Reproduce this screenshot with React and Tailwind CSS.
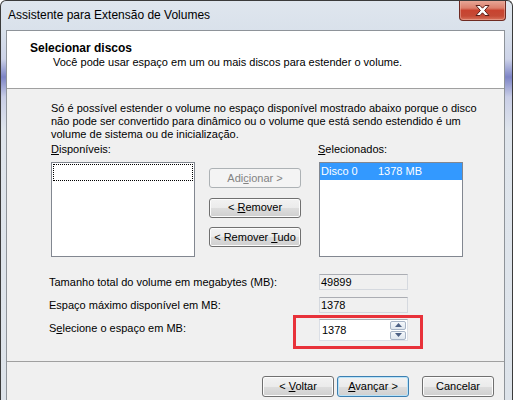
import React from 'react';

function Btn({ children, disabled, primary, className = '' }) {
  let look = 'border-[#707070] bg-[linear-gradient(to_bottom,#f2f2f2_0%,#ebebeb_50%,#dddddd_51%,#cfcfcf_100%)] shadow-[inset_0_0_0_1px_#fcfcfc] text-black';
  if (disabled) look = 'border-[#adb2b5] bg-[#f4f4f4] text-[#838383]';
  if (primary) look = 'border-[#3c7fb1] bg-[linear-gradient(to_bottom,#f2f2f2_0%,#ebebeb_50%,#dddddd_51%,#cfcfcf_100%)] shadow-[inset_0_0_0_1px_#b9e3f9] text-black';
  return (
    <div className={`flex items-center justify-center rounded-[3px] border text-[11px] leading-none ${look} ${className}`}>
      <span className="whitespace-pre">{children}</span>
    </div>
  );
}

function Arrow({ up }) {
  return (
    <svg width="7" height="4" viewBox="0 0 7 4">
      <path d={up ? 'M0 4 L3.5 0 L7 4 Z' : 'M0 0 L3.5 4 L7 0 Z'} fill="#4d6185" />
    </svg>
  );
}

export default function App() {
  return (
    <div className="w-[513px] h-[400px] overflow-hidden flex flex-col border-l border-t border-r border-[#3b3b3b] rounded-tl-[6px] rounded-tr-[6px] bg-[linear-gradient(to_bottom,#dfe6ee_0px,#d9e1eb_30px,#cdd3e8_58px,#7d84c6_76px,#c9cee6_96px,#dfe5ec_130px,#dde3ea_100%)] font-['Liberation_Sans',Arial,sans-serif] text-black">

      {/* title bar */}
      <div className="h-[29px] flex items-start">
        <span className="ml-[7px] mt-[7px] text-[12px] leading-[15px]">Assistente para Extensão de Volumes</span>
        <div className="ml-auto mr-[6px] -mt-[1px] w-[47px] h-[21px] rounded-b-[4px] border border-t-0 border-[#6e2a22] bg-[linear-gradient(to_bottom,#e9ab9c_0%,#dc7f6c_40%,#c8432f_52%,#c54a35_80%,#d9735c_100%)] shadow-[inset_0_0_0_1px_#f0b8aa80] flex items-center justify-center">
          <svg width="15" height="11" viewBox="0 0 15 11">
            <path d="M1 0.5 H5 L7.5 3.2 L10 0.5 H14 L9.6 5.5 L14 10.5 H10 L7.5 7.8 L5 10.5 H1 L5.4 5.5 Z" fill="#ffffff" stroke="#5a1f18" strokeWidth="1" strokeLinejoin="round" />
          </svg>
        </div>
      </div>

      {/* client area */}
      <div className="flex-1 ml-[5px] mr-[7px] border-l border-r border-t border-[#8e9399] bg-[#f0f0f0] flex flex-col">

        {/* header */}
        <div className="h-[58px] shrink-0 bg-white border-b border-[#a0a0a0] pt-[10px]">
          <div className="pl-[23px] text-[12px] leading-[14px] font-bold">Selecionar discos</div>
          <div className="pl-[46px] text-[11px] leading-[14px]">Você pode usar espaço em um ou mais discos para estender o volume.</div>
        </div>

        {/* body */}
        <div className="h-[273px] shrink-0 border-b border-[#a0a0a0] pl-[44px] pt-[13px] flex flex-col text-[11px]">
          <p className="leading-[13px]">
            Só é possível estender o volume no espaço disponível mostrado abaixo porque o disco<br />
            não pode ser convertido para dinâmico ou o volume que está sendo estendido é um<br />
            volume de sistema ou de inicialização.
          </p>

          <div className="flex mt-[2px]">
            <div className="w-[144px] flex flex-col">
              <span className="leading-[13px] h-[13px]"><u>D</u>isponíveis:</span>
              <div className="mt-[6px] h-[95px] border border-[#828790] bg-white p-[1px]">
                <div className="h-[17px] border border-dotted border-black"></div>
              </div>
            </div>

            <div className="ml-[14px] w-[92px] mt-[25px] flex flex-col gap-[9.5px]">
              <Btn disabled className="h-[20px]">Adi<u>c</u>ionar &gt;</Btn>
              <Btn className="h-[20px]">&lt; <u>R</u>emover</Btn>
              <Btn className="h-[20px]">&lt; Remover <u>T</u>udo</Btn>
            </div>

            <div className="ml-[18px] w-[144px] flex flex-col">
              <span className="leading-[13px] h-[13px] -ml-[1px]"><u>S</u>elecionados:</span>
              <div className="mt-[6px] h-[95px] border border-[#828790] bg-white">
                <div className="h-[17px] bg-[#3399ff] text-white flex items-center leading-none">
                  <span className="pl-[1px] w-[58px]">Disco 0</span>
                  <span>1378 MB</span>
                </div>
              </div>
            </div>
          </div>

          <div className="-ml-[2px] mt-[17px] flex flex-col">
            <div className="h-[16px] flex items-center">
              <span className="w-[270px]">Tamanho total do volume em megabytes (MB):</span>
              <div className="w-[89px] h-[16px] border border-[#d5d9df] border-t-[#abadb3] bg-[#f0f0f0] pl-[1px] flex items-center leading-none">49899</div>
            </div>
            <div className="mt-[7px] h-[16px] flex items-center">
              <span className="w-[270px]">Espaço máximo disponível em MB:</span>
              <div className="w-[89px] h-[16px] border border-[#d5d9df] border-t-[#abadb3] bg-[#f0f0f0] pl-[1px] flex items-center leading-none">1378</div>
            </div>
            <div className="mt-[6px] h-[22px] flex items-center">
              <span className="w-[270px] mb-[4px]">S<u>e</u>lecione o espaço em MB:</span>
              <div className="relative w-[89px] h-[22px] border border-[#dbdfe6] border-t-[#abadb3] bg-white flex items-center">
                <span className="pl-[2px] flex-1 leading-none">1378</span>
                <div className="mr-[1px] w-[16px] flex flex-col gap-[1px]">
                  <div className="h-[9px] border border-[#a7b4c6] rounded-[2px] bg-[linear-gradient(to_bottom,#f5f8fb,#dfe6ee)] flex items-center justify-center"><Arrow up /></div>
                  <div className="h-[9px] border border-[#a7b4c6] rounded-[2px] bg-[linear-gradient(to_bottom,#f5f8fb,#dfe6ee)] flex items-center justify-center"><Arrow /></div>
                </div>
                <div className="absolute -left-[27px] -top-[5px] w-[130px] h-[34px] border-[3px] border-[#e8323a]"></div>
              </div>
            </div>
          </div>
        </div>

        {/* footer */}
        <div className="flex justify-end pt-[14px] pr-[10px]">
          <Btn className="w-[72px] h-[21px]">&lt; <u>V</u>oltar</Btn>
          <Btn primary className="ml-[3px] w-[72px] h-[21px]"><u>A</u>vançar &gt;</Btn>
          <Btn className="ml-[13px] w-[72px] h-[21px]">Cancelar</Btn>
        </div>
      </div>
    </div>
  );
}
